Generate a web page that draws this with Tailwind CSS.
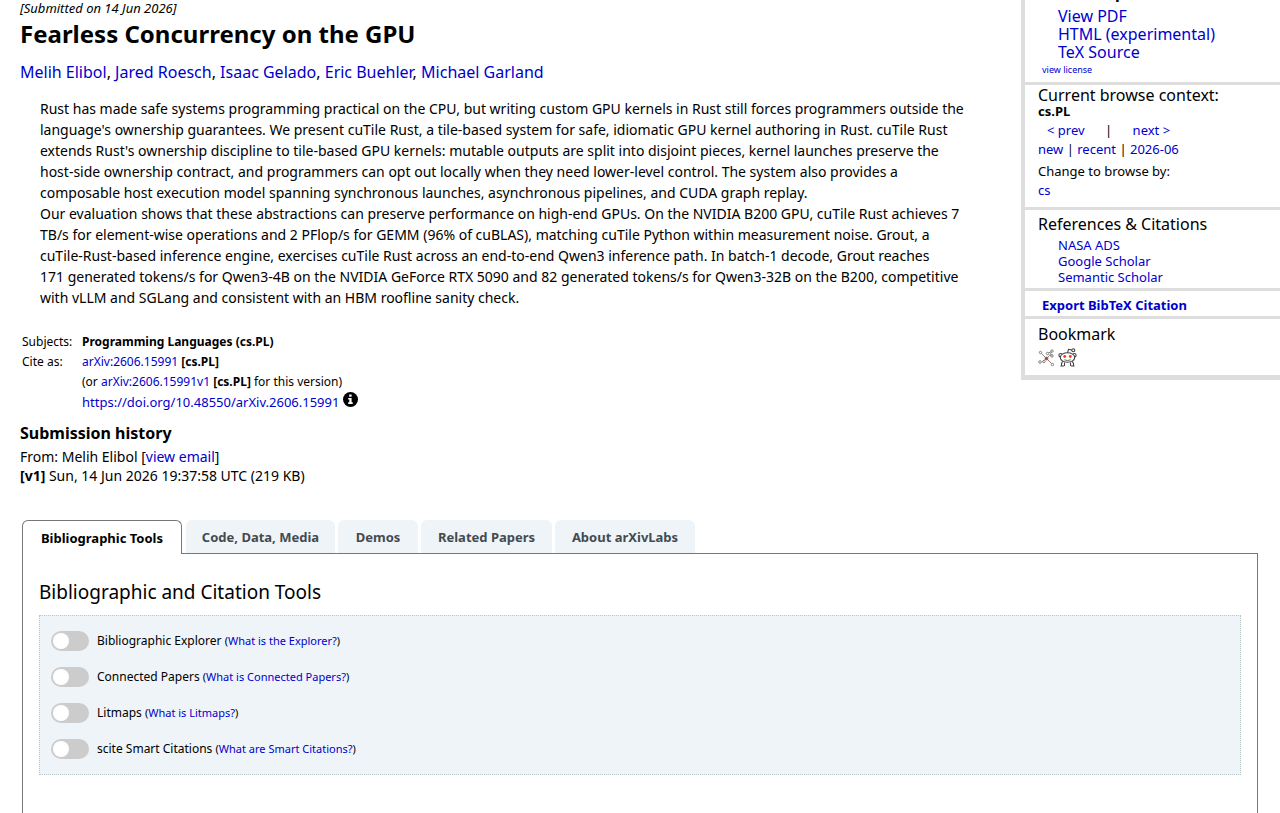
<!DOCTYPE html>
<html lang="en">
<head>
<meta charset="utf-8">
<meta name="viewport" content="width=device-width, initial-scale=1">
<title>Fearless Concurrency on the GPU</title>
<script src="https://cdn.jsdelivr.net/npm/@tailwindcss/browser@4"></script>
</head>
<body class="flex min-h-screen flex-col bg-white font-['Noto_Sans',sans-serif] text-[13px] leading-5 text-black [&_a]:text-[#0000cc]">
<div class="flex items-start">
  <main class="min-w-0 flex-1 pl-5">
    <p class="text-[13px] leading-4 italic">[Submitted on 14 Jun 2026]</p>
    <h1 class="mt-1 text-2xl leading-7 font-bold">Fearless Concurrency on the GPU</h1>
    <p class="mt-3.5 text-base leading-5"><a href="#">Melih Elibol</a>, <a href="#">Jared Roesch</a>, <a href="#">Isaac Gelado</a>, <a href="#">Eric Buehler</a>, <a href="#">Michael Garland</a></p>
    <p class="mt-4 pl-5 text-sm leading-[21px] whitespace-nowrap">Rust has made safe systems programming practical on the CPU, but writing custom GPU kernels in Rust still forces programmers outside the<br>language's ownership guarantees. We present cuTile Rust, a tile-based system for safe, idiomatic GPU kernel authoring in Rust. cuTile Rust<br>extends Rust's ownership discipline to tile-based GPU kernels: mutable outputs are split into disjoint pieces, kernel launches preserve the<br>host-side ownership contract, and programmers can opt out locally when they need lower-level control. The system also provides a<br>composable host execution model spanning synchronous launches, asynchronous pipelines, and CUDA graph replay.<br>Our evaluation shows that these abstractions can preserve performance on high-end GPUs. On the NVIDIA B200 GPU, cuTile Rust achieves 7<br>TB/s for element-wise operations and 2 PFlop/s for GEMM (96% of cuBLAS), matching cuTile Python within measurement noise. Grout, a<br>cuTile-Rust-based inference engine, exercises cuTile Rust across an end-to-end Qwen3 inference path. In batch-1 decode, Grout reaches<br>171 generated tokens/s for Qwen3-4B on the NVIDIA GeForce RTX 5090 and 82 generated tokens/s for Qwen3-32B on the B200, competitive<br>with vLLM and SGLang and consistent with an HBM roofline sanity check.</p>
    <table class="mt-6 ml-0.5 text-xs leading-5">
      <tbody>
        <tr><th class="w-[60px] p-0 text-left font-normal">Subjects:</th><td class="p-0 font-bold">Programming Languages (cs.PL)</td></tr>
        <tr><th class="p-0 text-left font-normal">Cite as:</th><td class="p-0"><a href="#">arXiv:2606.15991</a> <b>[cs.PL]</b></td></tr>
        <tr><td class="p-0"></td><td class="p-0">(or <a href="#">arXiv:2606.15991v1</a> <b>[cs.PL]</b> for this version)</td></tr>
        <tr><td class="p-0"></td><td class="p-0"><span class="flex items-start gap-1"><a href="#" class="text-[13px] leading-5">https://doi.org/10.48550/arXiv.2606.15991</a>
          <button aria-label="About DOIs"><svg class="block size-[15px]" viewBox="0 0 15 15"><circle cx="7.5" cy="7.5" r="7.5"/><path fill="#fff" d="M6.2 2.6h2.4v2.1H6.2zM5.2 6h3.4v4.3h1.1v1.6H5.2v-1.6h1.1V7.6H5.2z"/></svg></button></span></td></tr>
      </tbody>
    </table>
    <h2 class="mt-[11px] text-base leading-5 font-bold">Submission history</h2>
    <p class="mt-1 text-sm leading-[19px]">From: Melih Elibol [<a href="#">view email</a>]<br><b>[v1]</b> Sun, 14 Jun 2026 19:37:58 UTC (219 KB)</p>
  </main>

  <aside class="w-[259px] shrink-0 overflow-hidden border-b-[5px] border-l-4 border-[#ddd]">
    <section class="border-b-3 border-[#ddd] px-[13px] pb-1">
      <h2 class="-mt-4 mb-[7px] text-base leading-4 font-bold">Access Paper:</h2>
      <ul class="pl-5 text-base leading-[18px]">
        <li><a href="#">View PDF</a></li>
        <li><a href="#">HTML (experimental)</a></li>
        <li><a href="#">TeX Source</a></li>
      </ul>
      <p class="mt-px pl-1 text-[9px] leading-4"><a href="#">view license</a></p>
    </section>
    <section class="border-b-3 border-[#ddd] px-[13px] pt-0.5 pb-2">
      <h2 class="text-base leading-4">Current browse context:</h2>
      <p class="leading-4 font-bold">cs.PL</p>
      <p class="mt-px flex pl-[9px]"><a href="#">&lt; prev</a><span class="w-12 text-center">|</span><a href="#">next &gt;</a></p>
      <p class="leading-[18px]"><a href="#">new</a> | <a href="#">recent</a> | <a href="#">2026-06</a></p>
      <p class="mt-[3px] leading-5">Change to browse by:</p>
      <p class="leading-[18px]"><a href="#">cs</a></p>
    </section>
    <section class="border-b-3 border-[#ddd] px-[13px] pt-1 pb-[3px]">
      <h2 class="text-base leading-5">References &amp; Citations</h2>
      <ul class="mt-[3px] pl-5 leading-4">
        <li><a href="#">NASA ADS</a></li>
        <li><a href="#">Google Scholar</a></li>
        <li><a href="#">Semantic Scholar</a></li>
      </ul>
    </section>
    <section class="border-b-3 border-[#ddd] px-[17px] pt-1 pb-px">
      <a href="#" class="block font-bold">Export BibTeX Citation</a>
    </section>
    <section class="px-[13px] pt-[5px] pb-2">
      <h2 class="text-base leading-5">Bookmark</h2>
      <div class="mt-1 flex gap-1">
        <a href="#" aria-label="BibSonomy"><svg class="block h-[19px] w-4" viewBox="0 0 16 19" fill="none" stroke="#777" stroke-width=".9"><path d="M3 5l5.500 5.500M8.500 10.500l3-3M8.500 10.500L4 14M8.500 10.500l5.500 5.500M11.500 7.500l2.500-4M9.500 5.500l4-2M12 7.500l2.500-1"/><g fill="#fff"><circle cx="2.500" cy="4.500" r="1.200"/><circle cx="9.500" cy="5.500" r="1.200"/><circle cx="14" cy="3" r="1.200"/><circle cx="14" cy="8" r="1.200"/><circle cx="2" cy="14" r="1.300"/><circle cx="6" cy="13.500" r="1.200"/><circle cx="14.500" cy="16.500" r="1.200"/></g><circle cx="8.500" cy="10.500" r="1.500" fill="#b34" stroke="#965"/></svg></a>
        <a href="#" aria-label="Reddit"><svg class="block h-[19px] w-[19px]" viewBox="0 0 19 19" fill="none" stroke="#444" stroke-width="1.100"><path d="M9.500 5l1-3.700 3.800.8M5 13l-1.500 2.500v2.500M14 13l1.500 2.500v2.500M2.500 18H6M13 18h3.500M6.500 14.500V18M12.500 14.500V18"/><circle cx="15.300" cy="2.200" r="1.500" fill="#fff"/><circle cx="2.600" cy="7.200" r="1.700" fill="#fff"/><circle cx="16.400" cy="7.200" r="1.700" fill="#fff"/><ellipse cx="9.500" cy="9.500" rx="7.200" ry="4.800" fill="#fff"/><path d="M6.300 11.800q3.200 1.500 6.400 0" stroke-width=".8"/><g fill="#f43b12" stroke="none"><circle cx="6.700" cy="8.500" r="1.400"/><circle cx="12.300" cy="8.500" r="1.400"/></g></svg></a>
      </div>
    </section>
  </aside>
</div>

<section class="mx-[22px] mt-[35px] flex flex-1 flex-col">
  <div role="tablist" class="flex gap-[3px] text-[13px] font-bold text-[#444b50]">
    <button role="tab" aria-selected="true" class="z-10 -mb-px mr-px h-[34px] w-40 rounded-t-md border border-b-0 border-[#777] bg-white text-black">Bibliographic Tools</button>
    <button role="tab" class="h-[33px] w-[149px] rounded-t-md bg-[#eff4f8]">Code, Data, Media</button>
    <button role="tab" class="h-[33px] w-20 rounded-t-md bg-[#eff4f8]">Demos</button>
    <button role="tab" class="h-[33px] w-[131px] rounded-t-md bg-[#eff4f8]">Related Papers</button>
    <button role="tab" class="h-[33px] w-[140px] rounded-t-md bg-[#eff4f8]">About arXivLabs</button>
  </div>
  <div role="tabpanel" class="flex-1 border border-b-0 border-[#777] px-4 pt-[26px]">
    <h2 class="text-[19px] leading-6">Bibliographic and Citation Tools</h2>
    <div class="mt-[11px] border border-dotted border-[#b8c8c8] bg-[#eff4f8] px-[11px] py-[7px] text-xs">
      <div class="flex h-9 items-center gap-2"><input id="t1" type="checkbox" class="h-5 w-[38px] appearance-none rounded-full bg-[#ccc] p-0.5 before:block before:size-4 before:rounded-full before:bg-white checked:before:ml-auto"><p><label for="t1">Bibliographic Explorer</label> <span class="text-[11px]">(<a href="#">What is the Explorer?</a>)</span></p></div>
      <div class="flex h-9 items-center gap-2"><input id="t2" type="checkbox" class="h-5 w-[38px] appearance-none rounded-full bg-[#ccc] p-0.5 before:block before:size-4 before:rounded-full before:bg-white checked:before:ml-auto"><p><label for="t2">Connected Papers</label> <span class="text-[11px]">(<a href="#">What is Connected Papers?</a>)</span></p></div>
      <div class="flex h-9 items-center gap-2"><input id="t3" type="checkbox" class="h-5 w-[38px] appearance-none rounded-full bg-[#ccc] p-0.5 before:block before:size-4 before:rounded-full before:bg-white checked:before:ml-auto"><p><label for="t3">Litmaps</label> <span class="text-[11px]">(<a href="#">What is Litmaps?</a>)</span></p></div>
      <div class="flex h-9 items-center gap-2"><input id="t4" type="checkbox" class="h-5 w-[38px] appearance-none rounded-full bg-[#ccc] p-0.5 before:block before:size-4 before:rounded-full before:bg-white checked:before:ml-auto"><p><label for="t4">scite Smart Citations</label> <span class="text-[11px]">(<a href="#">What are Smart Citations?</a>)</span></p></div>
    </div>
  </div>
</section>
</body>
</html>
